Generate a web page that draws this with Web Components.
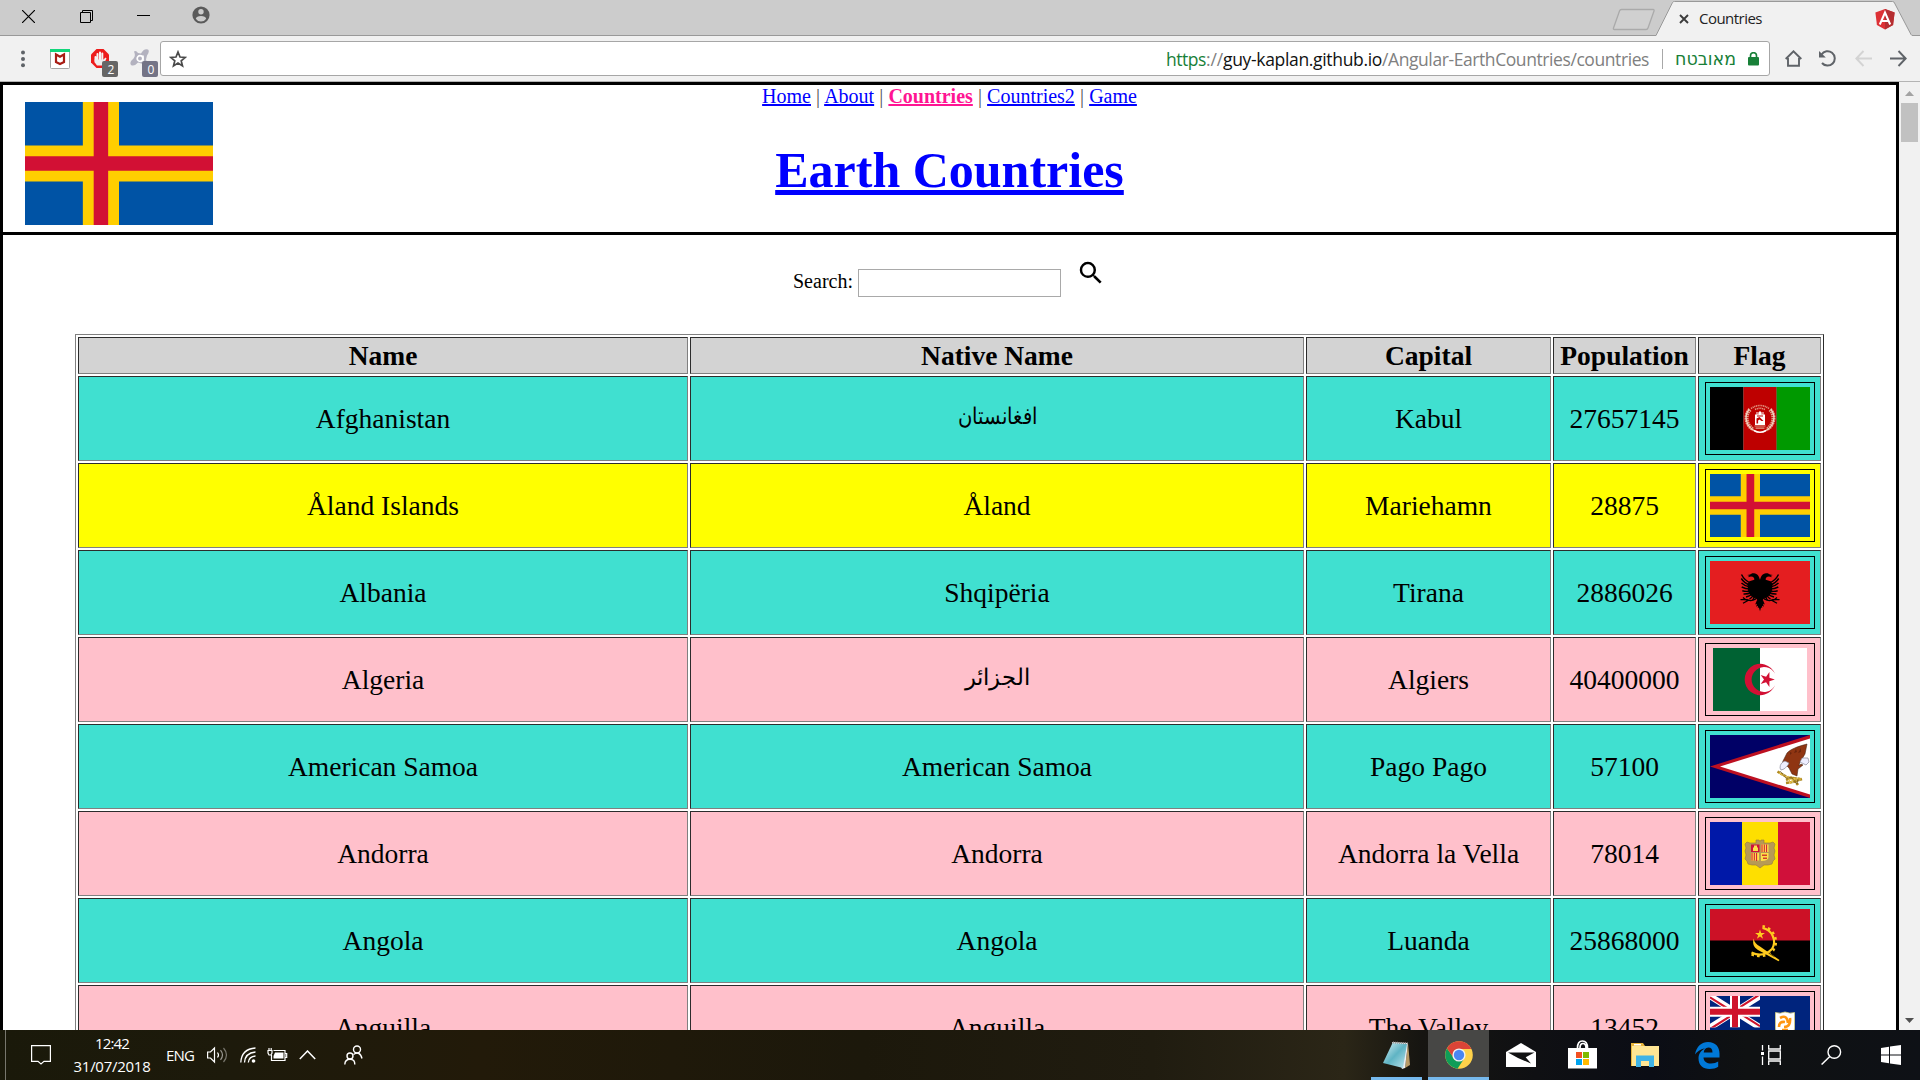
<!DOCTYPE html>
<html lang="en">
<head>
<meta charset="utf-8">
<title>Countries</title>
<style>
html,body{margin:0;height:100%;overflow:hidden;background:#fff}
</style>
</head>
<body>
<desktop-screen></desktop-screen>
<script>
const define = (name, css, html, setup) => {
  const t = document.createElement('template');
  t.innerHTML = `<style>*{box-sizing:border-box}svg{display:block;flex:none}${css}</style>${html}`;
  customElements.define(name, class extends HTMLElement {
    connectedCallback() {
      if (this.shadowRoot) return;
      this.attachShadow({ mode: 'open' }).append(t.content.cloneNode(true));
      if (setup) setup.call(this, this.shadowRoot);
    }
  });
};

/* Text run that is tracked to an exact width */
define('fit-text', `:host{display:inline-block;white-space:pre}span{display:inline-block}`,
  `<span><slot></slot></span>`, function (r) {
    const s = r.querySelector('span'), w = +this.getAttribute('w'), n = this.textContent.length;
    if (this.hasAttribute('scale')) {
      const k = w / s.getBoundingClientRect().width;
      s.style.transform = `scaleX(${k})`;
      s.style.transformOrigin = '50% 50%';
    } else {
      s.style.letterSpacing = ((w - s.getBoundingClientRect().width) / n) + 'px';
    }
  });

/* ---------- flags ---------- */
const star = (cx, cy, r, rot = -90, k = .382) => Array.from({ length: 10 }, (_, i) => {
  const a = (rot + i * 36) * Math.PI / 180, q = i % 2 ? r * k : r;
  return (cx + q * Math.cos(a)).toFixed(2) + ',' + (cy + q * Math.sin(a)).toFixed(2);
}).join(' ');

const FLAGS = {
  af: ['0 0 100 63', `<path d="M0 0h33.3v63H0z"/><path fill="#be0000" d="M33.3 0h33.4v63H33.3z"/><path fill="#090" d="M66.7 0H100v63H66.7z"/>
    <g fill="none" stroke="#f3d3c4"><path stroke="#e0a58d" stroke-width="4" stroke-dasharray="1.6 .7" d="M40 22.500C34.500 28 35.500 38 43.500 42.500M60 22.500C65.500 28 64.500 38 56.500 42.500"/><path stroke-width="1.200" d="M39 22.500C33.500 29 36 40 45 44M61 22.500C66.500 29 64 40 55 44"/><path stroke="#e2947f" stroke-width="1.600" stroke-dasharray="1.200 .6" d="M41 21.500Q50 15.500 59 21.500M45 22.500q5-2.500 10 0"/></g>
    <path fill="#fff" d="M45 27.500h1.500v-2.500h1v2.500h1l-.3-1.800 1.800-1.700 1.800 1.700-.3 1.800h1v-2.500h1v2.500h1.500v10.500H45z"/><path fill="#be0000" d="M46.500 31.500l3-1.500 4 4h-2l-2-1.600-1.400 1v3h-1.600zM47 28.500h6v.9h-6z"/><path stroke="#e0a58d" stroke-width="1.200" d="M44.500 39h11M45.500 41.200h9"/><path stroke="#fff" stroke-width="1.600" d="M44 43.500q6 3.500 12 0" fill="none"/>`],
  ax: ['0 0 26 17', `<path fill="#0053a5" d="M0 0h26v17H0z"/><path fill="#ffce00" d="M8 0h5v17H8zM0 6h26v5H0z"/><path fill="#d21034" d="M9.500 0h2v17h-2zM0 7.500h26v2H0z"/>`],
  al: ['0 0 100 63', `<path fill="#e41e20" d="M0 0h100v63H0z"/>${['', 'transform="translate(100 0) scale(-1 1)"'].map(m => `<g ${m}>
    <path d="M50.200 19.500C49 15 47.500 12.500 44 12.200c-2-.2-3 .5-3.800 1.300l-3 .4 2.200.9-1.600 1.500 3.200-.8c2.500.2 3.500 1.300 3.300 3.200l-4.800 1.500-2 3 .5 6 2 4.500 3.500 3 3 .4 1 3 1.500 1.500h1.200z"/>
    <path fill="none" stroke="#000" stroke-width="1.450" d="M40.500 22q-6-2.500-9-8.500M40 24q-5.500-1.500-8.700-6.500M40 26q-5-.6-8.500-4M40 28q-4.500 0-8.300-2M40 30q-4 .8-7.700-.2M41 31.500q-3.500 1.800-7.500 1.500M42 33q-2.500 2.200-6 3M43.500 34q-1.500 2.500-4 4M45 35l-2.500 4.500"/>
    <path fill="none" stroke="#000" stroke-width="1.300" d="M47.500 36.500Q44 40 40 39.500q-4-1.500-9.500-.8M38 39.500l-5 2.800M36 39l-3-2.500"/>
    <path d="M50.100 38l-3.300 1.500-1.600 4 1.700-.8-.7 3 1.800-1-.2 2.300 1.100-.6 1.200 3.800z"/></g>`).join('')}`],
  dz: ['0 0 94 63', `<path fill="#fff" d="M0 0h94v63H0z"/><path fill="#006233" d="M0 0h47v63H0z"/><path fill="#d21034" d="M62 25.800A15.700 15.700 0 1 0 62 37.200 12.400 12.400 0 1 1 62 25.800z"/><polygon fill="#d21034" points="${star(54, 31.5, 7.8, 0)}"/>`],
  as: ['0 0 100 63', `<path fill="#006" d="M0 0h100v63H0z"/><path fill="#bd1021" d="M0 31.500L100 0v63z"/><path fill="#fff" d="M10 31.500L100 3.500v56z"/>
    <path fill="#8f3512" stroke="#3a1a0c" stroke-width=".5" d="M73 26l4-8c4-4 9-6 20-9l-1 5-1 5-3 5-2 3-1 4 2-2 2 1-5 4-1 7-5-2-3-6-3-3-4-1z"/><path fill="#6a250c" d="M80 17l2 1-2 2zM86 14l1 3-3 1zM91 13l0 4-3 1z"/><path fill="#eef" stroke="#778" stroke-width=".6" d="M70 33c0-4 2-6 5-7l4 2c-1 3-3 4-5 6l-3 1zM92 23l6 0 1 4-3 3-4-2-2-1z"/>
    <path fill="none" stroke="#b08a20" stroke-width="2.600" stroke-dasharray="3 .6" d="M67.500 36.500l10 6 13 1.500M76 45l6-3 6 8M76 48l7-1 9-3"/><path stroke="#e4bf45" stroke-width="1.200" fill="none" d="M69 38l11 6 11 0M78 41l2 7 5-5"/><path stroke="#4b3510" stroke-width=".5" fill="none" d="M70 36l6 7 6 0 5 6 1-5"/>`],
  ad: ['0 0 100 63', `<path fill="#0018a8" d="M0 0h32v63H0z"/><path fill="#fedf00" d="M32 0h36v63H32z"/><path fill="#d0103a" d="M68 0h32v63H68z"/>
    <path fill="#b79a55" stroke="#94793d" stroke-width=".6" d="M46 18h3l1 1.500 1-1.500h3v3l6 0 3-1 2 2-1 4 1 3-1 4 1 4-2 2-1 3-4 1-4 0-4 3-4-3-4 0-4-1-1-3-2-2 1-4-1-4 1-3-1-4 2-2 3 1 6 0z"/><path fill="#d0103a" d="M41 22.500h8.500v7.500H41z"/><path fill="#ffe04a" d="M44 23.500h3v2h1v3.500h-5v-3.500h1zM51 22.500h7.500V30H51zM41 31h8v7.500h-8zM51 31h7.500v4q0 4-7.500 4z"/><path stroke="#d0103a" stroke-width="1" d="M52 22.500V30M54.300 22.500V30M56.600 22.500V30M42 31v7.500M44.300 31v7.500M46.600 31v8"/><path stroke="#d0402a" stroke-width="1.600" d="M52 33.200h5M53 36.200h4"/>`],
  ao: ['0 0 100 63', `<path d="M0 0h100v63H0z"/><path fill="#cc1126" d="M0 0h100v31.500H0z"/><g fill="none" stroke="#ffcb1f"><path stroke-width="2.200" d="M52.500 19A14 14 0 0 1 62 40Q53 49 41.500 43.500"/><path stroke-width="2.400" stroke-dasharray="2.600 3.200" d="M52.500 17.200A15.800 15.800 0 0 1 63.200 41.600Q53.500 50.500 40.300 45"/></g><path fill="#ffcb1f" d="M43.500 29.500c1 4 3 6 6.500 8L69.500 51l-1 1.200L48 41c-4.500-3-5.500-6-4.500-11.500z"/><path fill="#5e4600" d="M59 43.500l6 4-.5.700-6-3.600z"/><polygon fill="#ffcb1f" points="${star(50, 25.6, 5.2)}"/>`],
  ai: ['0 0 100 63', `<path fill="#00247d" d="M0 0h100v63H0z"/><svg x="0" y="0" width="50" height="31.500" viewBox="0 0 50 31.500"><path stroke="#fff" stroke-width="6.300" d="M0 0l50 31.500M50 0L0 31.500"/><path stroke="#cf142b" stroke-width="2.100" d="M0 1.300l24 15.200M50 30.200L26 15M49 -1L25 14.400M1 32.500l24-15.400"/><path stroke="#fff" stroke-width="10" d="M25 0v31.500M0 15.750h50"/><path stroke="#cf142b" stroke-width="6" d="M25 0v31.500M0 15.750h50"/></svg>
    <path fill="#fff" stroke="#d7d080" stroke-width=".8" d="M65.500 16.500q5 1.500 9.500-.5 5 2 9.500.5V32q0 8-9.500 13-9.500-5-9.500-13z"/><path fill="none" stroke="#ff9612" stroke-width="2.600" d="M70 22q7-4 8 5M80 22q1 9-6 9M69 31q0-6 6-5M72 34h6"/><path fill="#9cf" d="M66 37h18q-3 5-9 8-6-3-9-8z"/>`]
};
define('country-flag', `:host{display:block}.flag{width:100%;height:100%}`, `<svg class="flag" preserveAspectRatio="none"></svg>`, function (r) {
  const f = FLAGS[this.getAttribute('code')], s = r.querySelector('svg');
  s.setAttribute('viewBox', f[0]); s.innerHTML = f[1];
});

/* ---------- browser chrome ---------- */
define('browser-tab', `
:host{display:block;position:relative;width:264px;height:36px;font:15px "Open Sans",sans-serif;color:#222}
.shape{position:absolute;left:0;top:0}
.row{position:relative;display:flex;align-items:center;height:36px;padding:0 21px 0 27px}
.x{margin:2px 10px 0 0}.logo{margin:2px 0 0 auto}fit-text{margin-top:-1px}`,
`<svg class="shape" width="264" height="36"><path fill="#f1f1f1" stroke="#999" d="M-2 35.500H4L20.500 2.500Q21 1.500 22.500 1.500H240.500Q242 1.500 242.500 3L259 34.500Q259.500 35.500 261 35.500H266"/><path stroke="#f1f1f1" stroke-width="1.200" d="M4.500 35.500h255"/></svg>
<div class="row"><svg class="x" width="10" height="10"><path stroke="#3c3c3c" stroke-width="1.900" d="M1 1l8 8M9 1L1 9"/></svg><fit-text w="63">Countries</fit-text>
<svg class="logo" width="20" height="21" viewBox="0 0 20 21"><path fill="#dd3135" d="M10 0l9.600 3.400-1.500 12.500L10 20.600 1.900 15.900.4 3.400z"/><path fill="#b52e31" d="M10 0l9.600 3.400-1.500 12.500L10 20.600z"/><path fill="none" stroke="#fff" stroke-width="2" d="M4.800 15.500L10 3.600l5.200 11.900M7 12h6"/></svg></div>`);

define('tab-strip', `:host{display:flex;height:36px;background:#ccc;border-bottom:1px solid #999;padding-left:22px;align-items:flex-start}
.spacer{flex:1}browser-tab{margin-right:4px;flex:none}`,
`<svg style="margin-top:10px" width="13" height="13"><path stroke="#000" stroke-width="1.200" d="M0 0l13 13M13 0L0 13"/></svg>
<svg style="margin:10px 0 0 45px" width="13" height="13"><path fill="none" stroke="#000" d="M.5 2.500h10v10H.5zM2.500 2.500V.5h10v10h-2"/></svg>
<svg style="margin:15px 0 0 44px" width="13" height="1"><path fill="#000" d="M0 0h13v1H0z"/></svg>
<svg style="margin:6px 0 0 42px" width="18" height="18"><circle cx="9" cy="9" r="8.600" fill="#5a5a5a"/><circle cx="9" cy="5.800" r="2.700" fill="#ccc"/><path fill="#ccc" d="M3.800 12.700Q4.500 10 9 10t5.200 2.700Q12.500 15.500 9 15.500t-5.200-2.800z"/></svg>
<div class="spacer"></div>
<svg style="margin:8px -4px 0 0" width="44" height="23"><path fill="#d0d0d0" stroke="#aaa" stroke-width="1.300" d="M9.500 1.500H41q1.500 0 1 1.500l-6 17q-.5 1.500-2 1.500H2.500q-1.500 0-1-1.500L7.500 3q.5-1.500 2-1.500z"/></svg>
<browser-tab></browser-tab>`);

define('ext-badge', `:host{position:absolute;right:-4px;bottom:-8px;width:16px;height:16px;border-radius:2px;background:var(--c,#666);color:#fff;font:12px/17px "Open Sans",sans-serif;text-align:center;padding-left:2px}`, `<slot></slot>`);

define('address-bar', `:host{display:flex;align-items:center;width:1610px;height:35px;background:#fff;border:1px solid #a6a6a6;border-radius:3px;padding:0 10px 0 8px;font:17.500px "Open Sans",sans-serif;color:#808080}
.sp{flex:1}.g{color:#188038}.b{color:#111}.url{display:flex;margin-top:0}.sep{width:1px;height:20px;background:#a8a8a8;margin:0 11px 0 13px}
.he{font:18px "Noto Sans","DejaVu Sans",sans-serif;color:#188038;margin-top:-2px}`,
`<svg width="18" height="18" viewBox="0 0 18 18"><path fill="none" stroke="#4a4a4a" stroke-width="1.700" d="M9 2l2 5 5.300.4-4.100 3.400 1.300 5.100L9 13.100l-4.500 2.800 1.300-5.100L1.700 7.400 7 7z"/></svg>
<div class="sp"></div>
<div class="url"><fit-text w="40" class="g">https</fit-text><fit-text w="17">://</fit-text><fit-text w="159" class="b">guy-kaplan.github.io</fit-text><fit-text w="267">/Angular-EarthCountries/countries</fit-text></div>
<div class="sep"></div><fit-text w="61" scale class="he">מאובטח</fit-text>
<svg style="margin-left:11px" width="11" height="14"><rect x="0" y="5" width="11" height="8.500" rx="1" fill="#188038"/><path fill="none" stroke="#188038" stroke-width="1.600" d="M2.500 6V3.700a3 3 0 0 1 6 0V6"/></svg>`);

define('tool-bar', `:host{display:flex;align-items:center;height:46px;background:#f1f1f1;border-bottom:1px solid #b4b4b4;padding-left:21px}
.ext{position:relative;width:20px;height:20px}address-bar{margin-left:10px;flex:none}`,
`<svg width="4" height="18"><g fill="#5f6368"><circle cx="2" cy="2.500" r="2"/><circle cx="2" cy="9" r="2"/><circle cx="2" cy="15.300" r="2"/></g></svg>
<div class="ext" style="margin-left:25px"><svg width="20" height="20"><rect x=".5" y=".5" width="19" height="19" rx="1" fill="#fff" stroke="#a5a5a5"/><path fill="#12d67b" d="M0 0h20v3H0z"/><path fill="none" stroke="#a81c14" stroke-width="2.200" d="M6 5.500v7.600l4 1.900 4-1.900V5.500L10 7.800z"/></svg></div>
<div class="ext" style="margin-left:20px"><svg width="20" height="20"><path fill="#ed1c1c" d="M6.500 0h7L19 5.500v8L13.500 19h-7L1 13.500v-8z"/><g stroke="#f4f4f4" stroke-width="2" stroke-linecap="round"><path d="M7.500 5v8M10 3.500V12M12.300 4.500V12M5.500 8v5"/></g><path fill="#eee" d="M4.500 10.500h9l2-2 1 1-3.500 7H7q-2.500-2-2.500-6z"/></svg><ext-badge style="right:-8px">2</ext-badge></div>
<div class="ext" style="margin-left:20px"><svg width="20" height="20"><path fill="#b3b2bf" d="M4 2.500Q6 1 8 4l3 .5Q14-1 18 .5q2 1.500-1 6l-1 4 2 6-5-1.500-5-1.500q-4 4.500-7 2.500-2-3 2.500-6.500Q6 7 4 2.500z"/><circle cx="10" cy="9.500" r="2.800" fill="none" stroke="#fff" stroke-width="1.700"/><path stroke="#fff" stroke-width="1.600" d="M13 6.500v7"/></svg><ext-badge style="right:-8px;--c:#747486">0</ext-badge></div>
<address-bar></address-bar>
<svg style="margin-left:15px" width="17" height="17"><path fill="none" stroke="#5f6368" stroke-width="1.900" d="M.7 9L8.500 1.300 16.300 9M3 8v7.700h11V8"/></svg>
<svg style="margin-left:17px" width="18" height="18"><path fill="none" stroke="#5f6368" stroke-width="2" d="M2.500 4.500A7.200 7.200 0 1 1 3 13"/><path fill="#5f6368" d="M0 1v6.500h6.800z"/></svg>
<svg style="margin-left:18px" width="17" height="17"><path fill="none" stroke="#d3d3d3" stroke-width="1.900" d="M17 8.500H1.500M8.500 1L1.300 8.500l7.200 7.500"/></svg>
<svg style="margin-left:18px" width="17" height="17"><path fill="none" stroke="#5f6368" stroke-width="1.900" d="M0 8.500h15.500M8.500 1l7.200 7.500L8.500 16"/></svg>`);

/* ---------- page ---------- */
define('site-header', `:host{display:flex;height:150px;border-bottom:3px solid #000;font:20px/23px "Liberation Serif",serif}
country-flag{width:188px;height:123px;margin:17px 0 0 22px}.mid{flex:1;text-align:center;margin-right:210px}
a{color:#00f;text-decoration:underline}.on{color:#ff1493;font-weight:bold}nav{color:#555;white-space:pre;word-spacing:.12px}
h1{font-size:50px;line-height:58px;margin:33px 0 0;color:#00f;text-decoration:underline}`,
`<country-flag code="ax"></country-flag><div class="mid"><nav><a>Home</a> | <a>About</a> | <a class="on">Countries</a> | <a>Countries2</a> | <a>Game</a></nav><h1>Earth Countries</h1></div>`);

define('search-box', `:host{display:flex;padding:23px 0 0 790px;height:99px;font:20px/23px "Liberation Serif",serif;color:#000}
span{margin-top:12px;width:65px;white-space:nowrap}input{width:203px;height:28px;margin:11px 0 0;padding:0;border:1px solid #a9a9a9;border-radius:0;background:#fff}svg{margin:0 0 0 15px}`,
`<span>Search:</span><input type="text" aria-label="Search"><svg width="30" height="30" viewBox="0 0 24 24"><path d="M15.500 14h-.79l-.28-.27A6.471 6.471 0 0 0 16 9.500 6.500 6.500 0 1 0 9.500 16c1.610 0 3.090-.59 4.230-1.570l.27.28v.79l5 4.990L20.490 19l-4.990-5zm-6 0C7.010 14 5 11.990 5 9.500S7.010 5 9.500 5 14 7.010 14 9.500 11.990 14 9.500 14z"/></svg>`);

define('table-cell', `:host{display:flex;align-items:center;justify-content:center;border:1px solid;border-color:#2c2c2c #808080 #808080 #2c2c2c;background:var(--row);white-space:nowrap}`, `<slot></slot>`);

define('country-row', `:host{display:grid;grid-template-columns:610px 614px 245px 143px 123px;gap:2px;height:85px;color:#000;font:27.500px "Liberation Serif",serif}
.frame{width:110px;height:73px;border:1px solid #000;display:flex;justify-content:center;align-items:center;margin-left:1px}country-flag{width:100px;height:63px}.dz{width:94px}fit-text{font-size:22.500px;margin-bottom:4px}`,
``, function (r) {
  const [name, native, capital, pop, code] = this.getAttribute('data').split('|');
  const ar = { af: 79, dz: 65 }[code];
  r.innerHTML += `<table-cell>${name}</table-cell><table-cell>${ar ? `<fit-text w="${ar}" scale>${native}</fit-text>` : native}</table-cell><table-cell>${capital}</table-cell><table-cell>${pop}</table-cell><table-cell><div class="frame"><country-flag class="${code}" code="${code}"></country-flag></div></table-cell>`;
});
define('head-row', `:host{display:grid;grid-template-columns:610px 614px 245px 143px 123px;gap:2px;height:37px;color:#000;font:bold 27.500px "Liberation Serif",serif;--row:#d3d3d3}`,
`<table-cell>Name</table-cell><table-cell>Native Name</table-cell><table-cell>Capital</table-cell><table-cell>Population</table-cell><table-cell>Flag</table-cell>`);

const ROWS = [
  ['Afghanistan|افغانستان|Kabul|27657145|af', '#40e0d0'],
  ['Åland Islands|Åland|Mariehamn|28875|ax', '#ff0'],
  ['Albania|Shqipëria|Tirana|2886026|al', '#40e0d0'],
  ['Algeria|الجزائر|Algiers|40400000|dz', '#ffc0cb'],
  ['American Samoa|American Samoa|Pago Pago|57100|as', '#40e0d0'],
  ['Andorra|Andorra|Andorra la Vella|78014|ad', '#ffc0cb'],
  ['Angola|Angola|Luanda|25868000|ao', '#40e0d0'],
  ['Anguilla|Anguilla|The Valley|13452|ai', '#ffc0cb']
];
define('country-table', `:host{display:flex;flex-direction:column;gap:2px;width:1749px;margin-left:72px;border:1px solid;border-color:#808080 #2c2c2c #2c2c2c #808080;padding:2px}`,
`<head-row></head-row>${ROWS.map(([d, c]) => `<country-row data="${d}" style="--row:${c}"></country-row>`).join('')}`);

define('scroll-bar', `:host{display:flex;flex-direction:column;align-items:center;width:21px;background:#f1f1f1;padding:9px 0 7px}
.thumb{width:17px;height:39px;background:#c1c1c1;margin-top:7px}.dn{margin-top:auto}`,
`<svg width="9" height="5"><path fill="#a3a3a3" d="M0 5L4.500 0 9 5z"/></svg><div class="thumb"></div><svg class="dn" width="9" height="5"><path fill="#505050" d="M0 0h9L4.500 5z"/></svg>`);

define('page-view', `:host{display:flex;height:948px;overflow:hidden;background:#fff}
.page{width:1899px;height:1200px;border:3px solid #000;flex:none}`,
`<div class="page"><site-header></site-header><search-box></search-box><country-table></country-table></div><scroll-bar></scroll-bar>`);

/* ---------- taskbar ---------- */
define('task-clock', `:host{display:flex;flex-direction:column;align-items:center;width:80px;font:15px/23px "Open Sans",sans-serif;color:#fff}`,
`<fit-text w="34">12:42</fit-text><fit-text w="77">31/07/2018</fit-text>`);

define('task-app', `:host{display:flex;align-items:center;justify-content:center;width:61px;height:50px}
:host([open]){border-bottom:3px solid #76b9ed;padding-top:2px}:host([active]){background:#474745}`, `<slot></slot>`);

define('task-bar', `:host{display:flex;align-items:center;height:50px;background:linear-gradient(90deg,#1a190a 0,#1d1a0b 12%,#221a09 25%,#1c180b 45%,#201c10 60%,#2b2617 70%,#161511 74%,#0f1013 80%,#0b0d15 86%,#0f1112 91%,#0e1116 100%);font:15px "Open Sans",sans-serif;color:#fff}
:host>*{flex:none}.edge{width:1px;height:50px;background:#77766d;margin-left:5px}.sp{flex:1}`,
`<div class="edge"></div>
<svg style="margin-left:25px" width="20" height="20"><path fill="none" stroke="#fff" stroke-width="1.200" d="M.6.6h18.800v15.800h-6.400L10 19l-3-2.600H.6z"/></svg>
<task-clock style="margin:-1px 0 0 21px"></task-clock>
<fit-text w="28" style="margin-left:14px">ENG</fit-text>
<svg style="margin-left:13px" width="22" height="20" viewBox="0 0 22 20"><g fill="none" stroke="#fff" stroke-width="1.200"><path d="M.6 7h2.900l4-4v14l-4-4H.6z"/><path d="M10.500 7.500q2 2.500 0 5"/><path opacity=".55" d="M13.500 5.200q4 4.800 0 9.600"/><path opacity=".4" d="M16.500 3q6 7 0 14"/></g></svg>
<svg style="margin-left:11px" width="16" height="18"><g fill="none" stroke="#fff" stroke-width="1.300"><path d="M.8 16.500Q1.500 3 15.500 2"/><path d="M4.500 16.500Q5 7 15.500 6"/><path d="M8.300 16.500Q8.800 10.500 15.500 10"/></g><circle cx="13.500" cy="15" r="1.800" fill="#fff"/></svg>
<svg style="margin-left:11px" width="21" height="16"><path fill="none" stroke="#fff" stroke-width="1.200" d="M6.500 3.500H18v10H4.500V8M18.500 6.500h1.200v4h-1.200M1 3.500h4v2.500L4 8h-2L1 6zM2 3.500V1M4.200 3.500V1"/><path fill="#fff" d="M8 5.500h8.500v6H6.500V9z"/></svg>
<svg style="margin-left:11px" width="17" height="10"><path fill="none" stroke="#fff" stroke-width="1.500" d="M.8 9L8.500 1l7.700 8"/></svg>
<svg style="margin:0 0 0 28px" width="19" height="20"><g fill="none" stroke="#fff" stroke-width="1.400"><circle cx="13" cy="4.500" r="3.500"/><path d="M9.500 9.500Q16 5.500 18 13.500"/><circle cx="6" cy="11" r="3"/><path d="M.8 19.500Q1 14.200 6 14.200t4.800 5.300"/></g></svg>
<div class="sp"></div>
<task-app open style="width:51px"><svg width="28" height="30"><defs><linearGradient id="n" x1="0" y1="0" x2="1" y2="1"><stop offset="0" stop-color="#d9f1f5"/><stop offset=".5" stop-color="#5fb4c4"/><stop offset="1" stop-color="#bfe4ec"/></linearGradient></defs><path fill="#b89a66" d="M25 3l2 22-5 3z"/><path fill="#eee" d="M9 2l16 1-3 25-3 1z"/><path fill="url(#n)" d="M9.500 3L24 4l-4 24L0 23z"/><path stroke="#999" stroke-width="2" stroke-dasharray="1 1" d="M10 2.500l15 1"/></svg></task-app>
<task-app open active style="margin-left:6px"><svg width="28" height="28" viewBox="0 0 28 28"><circle cx="14" cy="14" r="13.800" fill="#ffd24a"/><path fill="#db4437" d="M14 14L2 7.200A13.800 13.800 0 0 1 26.300 8H14z"/><path fill="#0f9d58" d="M2 7.200A13.800 13.800 0 0 0 12.500 27.700L19.500 17 14 14 8 16z"/><path fill="#db4437" d="M2 7.200L8.600 17 14 8z"/><circle cx="14" cy="14" r="6.600" fill="#f1f1f1"/><circle cx="14" cy="14" r="5.200" fill="#4a86f2"/></svg></task-app>
<svg style="margin:0 0 0 17px" width="30" height="24"><path fill="#fff" d="M0 9L15 0l15 9v15H0z"/><path fill="#101112" d="M2 9.500h26.500l-8.800 4.800 5.300 6.200L12 15z"/></svg>
<svg style="margin:-2px 0 0 32px" width="29" height="29"><path fill="none" stroke="#fff" stroke-width="1.700" d="M9.500 8Q9.500 1 14.500 1T19.500 8M12 8q0-4.500 3-4.500T18 8"/><path fill="#fff" d="M0 8h29v20.500H0z"/><path fill="#f25022" d="M8 12h6v6H8z"/><path fill="#7fba00" d="M15 12h6v6h-6z"/><path fill="#00a4ef" d="M8 19h6v6H8z"/><path fill="#ffb900" d="M15 19h6v6h-6z"/></svg>
<svg style="margin:-1px 0 0 34px" width="28" height="24"><path fill="#e8b63c" d="M0 0h12l2 3h13v20H0z"/><path fill="#ffe694" d="M1 3h27v20H1z"/><path fill="#fff" d="M3 1h7v1.500H3z"/><path fill="#3fb3e6" d="M5 12.500h18V24h-5v-6h-8v6H5z"/></svg>
<svg style="margin:0 0 0 36px" width="25" height="27" viewBox="0 0 25 27"><path fill="#0078d7" d="M0 12.500C1.500 4 7 0 13 0c7.500 0 11.500 5 11.500 11.500v4H8.500c.2 4 3.500 6 7.500 6 3 0 5.200-.8 7.200-2v5.300C21 26.200 18 27 14.500 27 8 27 3.500 23 3.500 16.500c0-4.500 2.500-8 6.500-10.200-5 1-8 3.400-10 6.200zM8.700 10.500h8.800c0-3.200-1.300-5-4.200-5-2.700 0-4.300 2.200-4.600 5z"/></svg>
<svg style="margin:0 0 0 41px" width="21" height="20"><g fill="none" stroke="#fff" stroke-width="1.300"><path d="M1.500 0v5.500M1.500 11.500V20M7.700 0v4h11.600V0M7.700 20v-4h11.600v4M7.700 6h11.600v8H7.700z"/></g><path fill="#fff" d="M0 7h3v3H0z"/></svg>
<svg style="margin:0 0 0 39px" width="21" height="20"><circle cx="13.300" cy="7" r="6.300" fill="none" stroke="#fff" stroke-width="1.400"/><path stroke="#fff" stroke-width="1.500" d="M8.800 11.500L.6 19.500"/></svg>
<svg style="margin:0 19px 0 39px" width="20" height="20"><path fill="#fff" d="M0 3l8-1.300v7.800H0zM9 1.500L20 0v9.500H9zM0 10.500h8v7.800L0 17zM9 10.500h11V20L9 18.500z"/></svg>`);

define('desktop-screen', `:host{display:flex;flex-direction:column;width:1920px;height:1080px;overflow:hidden}:host>*{flex:none}`,
`<tab-strip></tab-strip><tool-bar></tool-bar><page-view></page-view><task-bar></task-bar>`);
</script>
</body>
</html>
